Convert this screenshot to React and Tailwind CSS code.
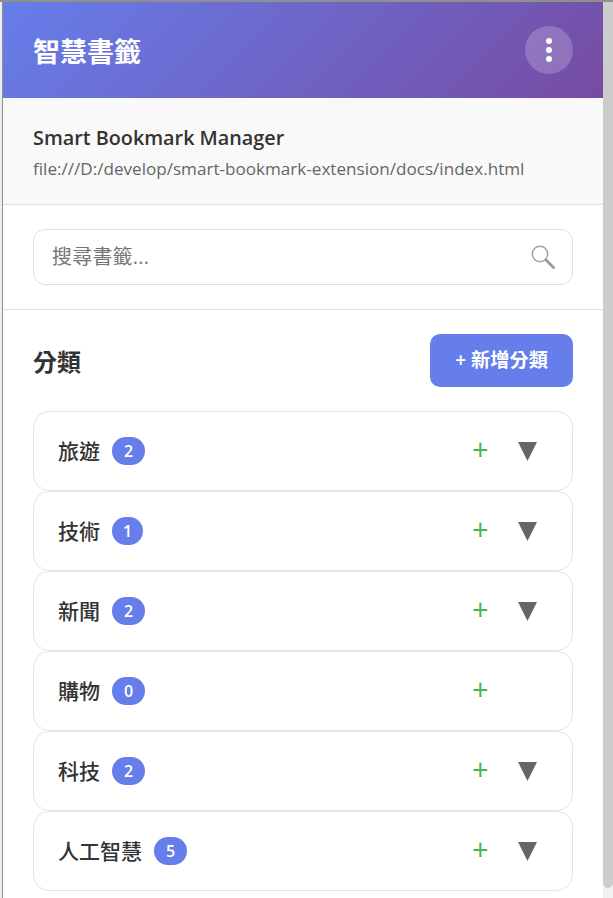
const categories = [
  { name: "旅遊", count: 2, open: true },
  { name: "技術", count: 1, open: true },
  { name: "新聞", count: 2, open: true },
  { name: "購物", count: 0, open: false },
  { name: "科技", count: 2, open: true },
  { name: "人工智慧", count: 5, open: true },
];

function CategoryRow({ name, count, open }) {
  return (
    <div className="flex h-20 items-center rounded-2xl border border-[#e4e4e4] bg-white pl-6 pr-[35px]">
      <span className="pt-[2px] text-[21px] font-medium text-[#333]">{name}</span>
      <span
        className={
          count === 1
            ? "ml-3 flex h-7 w-[31px] items-center justify-center rounded-full bg-[#667eea] text-base font-semibold text-white"
            : "ml-3 flex h-7 w-[33px] items-center justify-center rounded-full bg-[#667eea] text-base font-semibold text-white"
        }
      >
        {count}
      </span>
      <span className="mr-[2px] ml-auto mb-[5px] w-[14px] text-center text-[29px] leading-none font-medium text-[#4caf50]">+</span>
      <span className="ml-[30px] flex h-[19px] w-[19px]">
        {open && (
          <svg width="19" height="19" viewBox="0 0 19 19">
            <polygon points="0,0 19,0 9.5,19" fill="#666" />
          </svg>
        )}
      </span>
    </div>
  );
}

export default function App() {
  return (
    <div
      className="flex h-[898px] w-[613px] overflow-hidden border-t-2 border-[#8f8f8f] bg-[#eeeeee] pl-[2px] text-[#333]"
      style={{ fontFamily: '"Open Sans", "Noto Sans CJK TC", sans-serif' }}
    >
      <div className="w-[601px] shrink-0 border-l border-[#8f8f8f] bg-white">
        <header className="flex h-24 items-center justify-between bg-[linear-gradient(135deg,#667eea_0%,#764ba2_100%)] px-[30px]">
          <h1 className="pt-1 text-[27px] font-bold text-white">智慧書籤</h1>
          <button className="flex h-12 w-12 flex-col items-center justify-center gap-[3px] rounded-full bg-white/20">
            <span className="h-[6px] w-[6px] rounded-full bg-white" />
            <span className="h-[6px] w-[6px] rounded-full bg-white" />
            <span className="h-[6px] w-[6px] rounded-full bg-white" />
          </button>
        </header>

        <section className="h-[107px] border-b border-[#e0e0e0] bg-[#f9f9f9] px-[30px] pt-6">
          <h2 className="text-[19.8px] font-semibold leading-8 text-[#333]">Smart Bookmark Manager</h2>
          <p className="pt-[3px] text-[17.1px] leading-6 text-[#666]">file:///D:/develop/smart-bookmark-extension/docs/index.html</p>
        </section>

        <section className="border-b border-[#e0e0e0] px-[30px] py-6">
          <div className="flex h-14 items-center justify-between rounded-xl border border-[#e0e0e0] pl-[18px] pr-[17px]">
            <span className="text-[20px] tracking-[0.2px] text-[#757575]">搜尋書籤...</span>
            <svg width="24" height="24" viewBox="0 0 24 24" fill="none">
              <circle cx="9" cy="9" r="7.7" stroke="#a3a3a3" strokeWidth="1.5" />
              <path d="M15 15l7.5 7.5" stroke="#999" strokeWidth="2.8" strokeLinecap="round" />
            </svg>
          </div>
        </section>

        <section className="px-[30px] pt-6">
          <div className="mb-6 flex h-[53px] items-center justify-between">
            <h3 className="pt-[2px] text-2xl font-bold text-[#333]">分類</h3>
            <button className="flex h-[53px] w-[143px] items-center justify-center rounded-[10px] bg-[#667eea] text-[19.2px] font-semibold text-white">
              + 新增分類
            </button>
          </div>
          <div className="flex flex-col">
            {categories.map((c) => (
              <CategoryRow key={c.name} {...c} />
            ))}
          </div>
        </section>
      </div>

      <div className="w-[10px] shrink-0 bg-[#f1f1f1]">
        <div className="h-[886px] rounded-b-[5px] bg-[#cccccc]" />
      </div>
    </div>
  );
}
